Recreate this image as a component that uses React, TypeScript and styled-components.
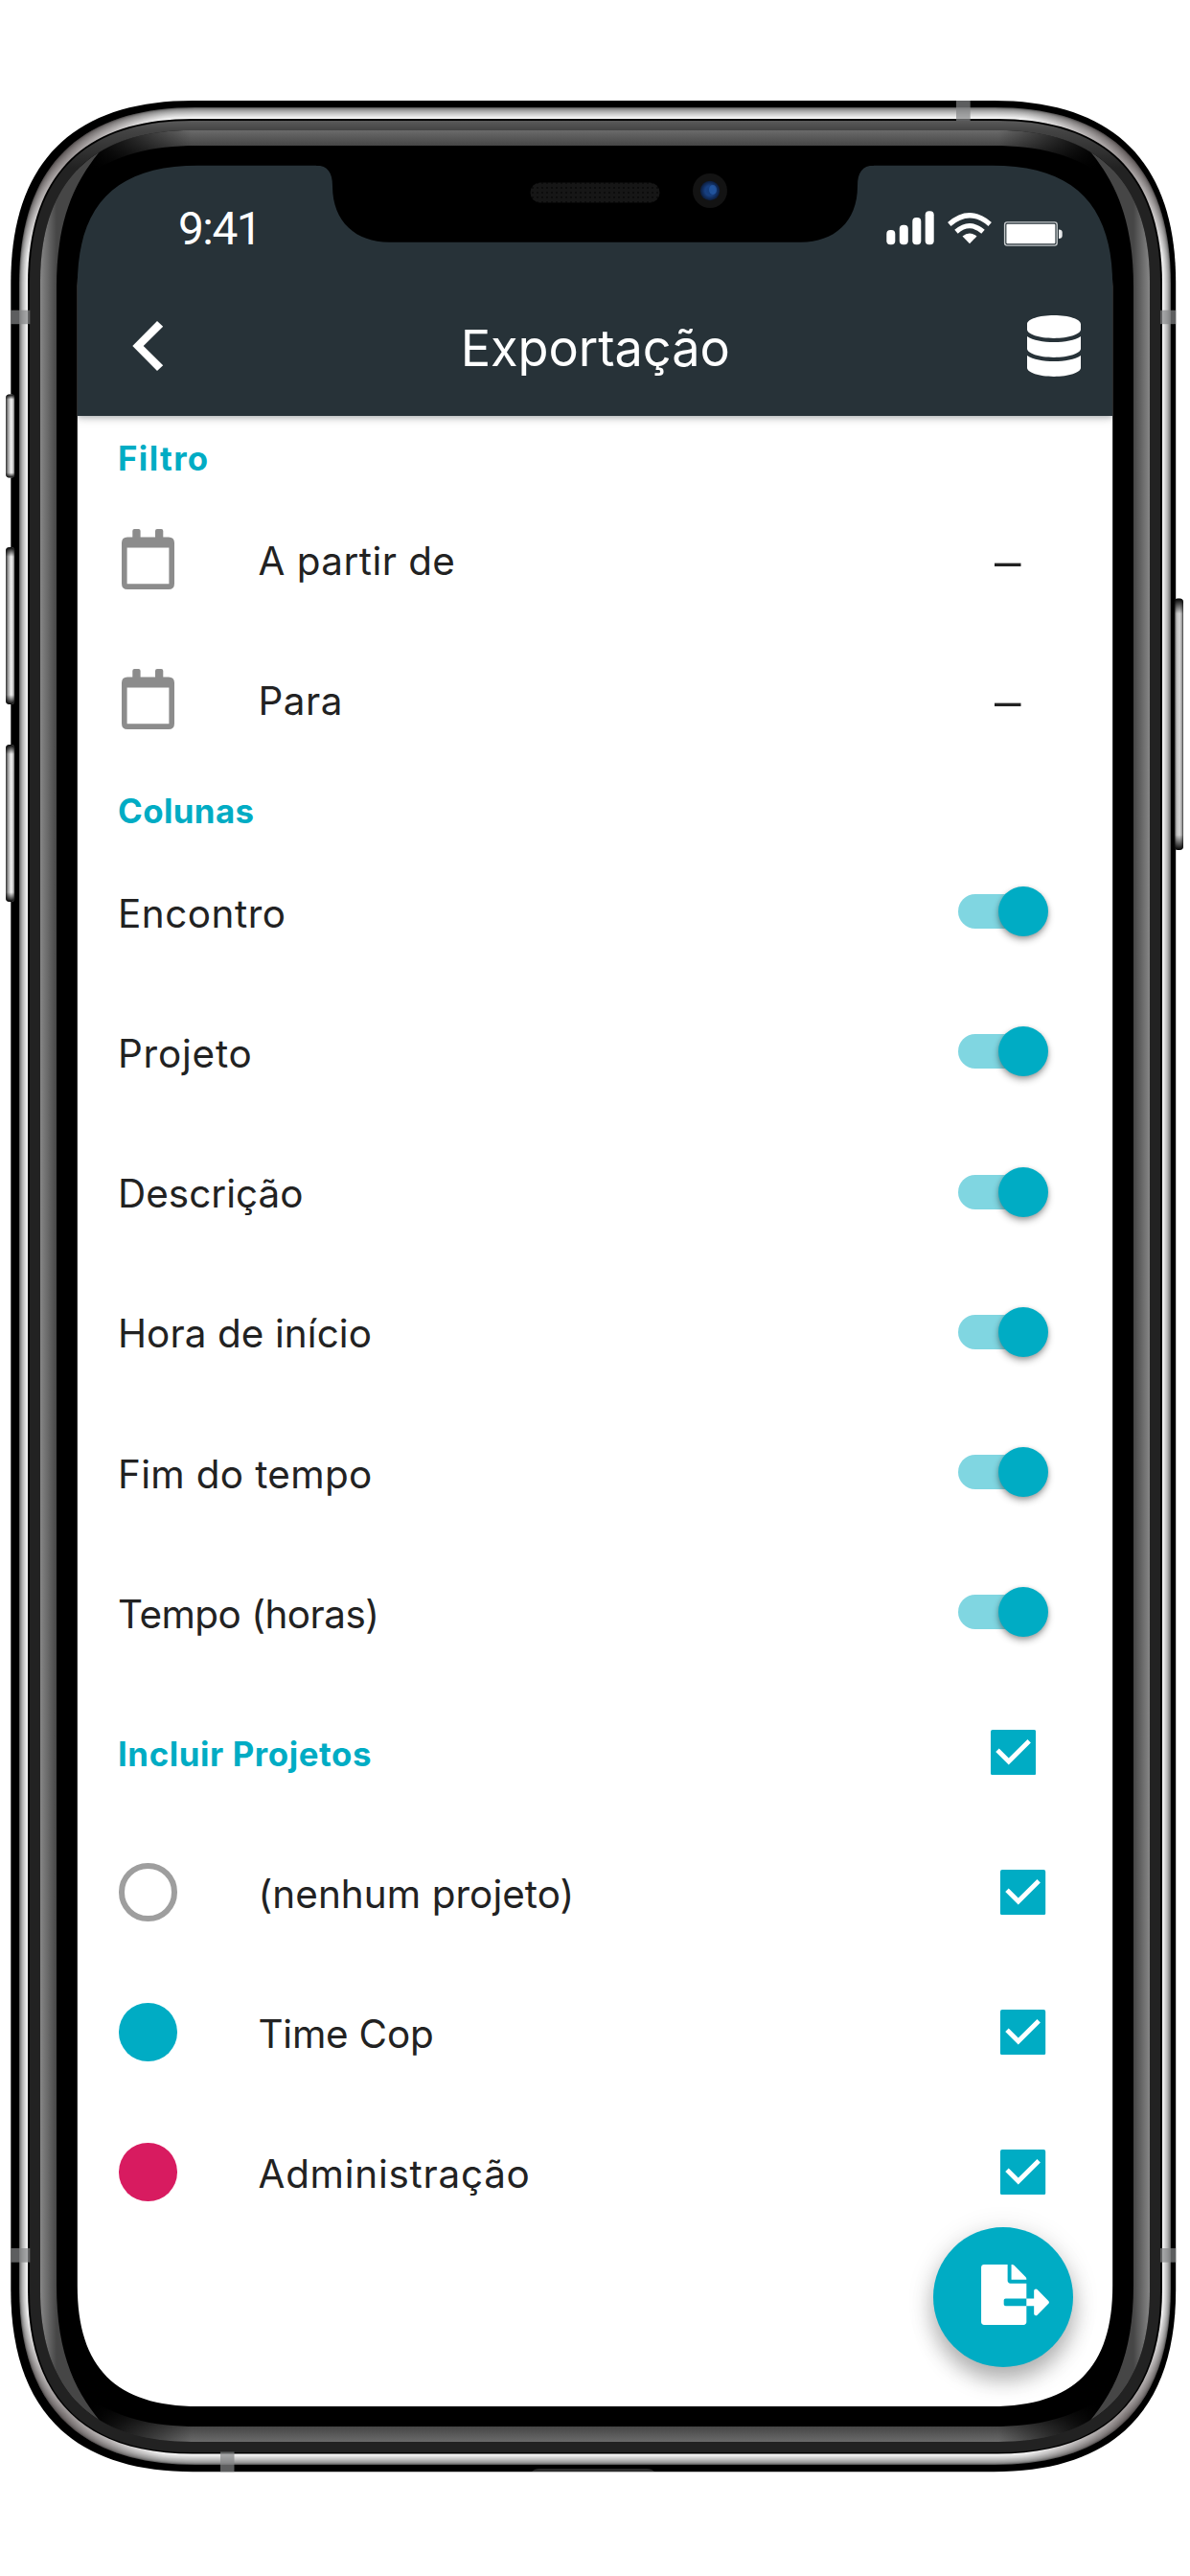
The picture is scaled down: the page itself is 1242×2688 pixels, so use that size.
import React from 'react';
import styled, { createGlobalStyle } from 'styled-components';

const accent = '#00acc4';
const chrome = '#273238';
const ink = '#222222';

const GlobalStyle = createGlobalStyle`
  *, *::before, *::after { box-sizing: border-box; }
  body {
    margin: 0;
    background: #fff;
    font-family: Inter, Roboto, "Liberation Sans", sans-serif;
    color: ${ink};
  }
`;

const Stage = styled.div`
  position: relative;
  width: 1242px;
  height: 2688px;
  padding: 172px 81px 177px;
  overflow: hidden;
`;

const FrameArt = styled.svg`
  position: absolute;
  inset: 0;
  pointer-events: none;
`;

const Screen = styled.main`
  position: relative;
  display: flex;
  flex-direction: column;
  width: 1080px;
  height: 2339px;
  background: #fff;
`;

const Header = styled.header`
  position: relative;
  flex: none;
  height: 262px;
  background: ${chrome};
  color: #fff;
  box-shadow: 0 1px 6px rgba(20, 30, 35, 0.3), 0 4px 10px rgba(0, 0, 0, 0.1);
`;

const StatusBar = styled.div`
  display: flex;
  justify-content: space-between;
  height: 116px;
  padding: 40px 52px 0 105px;
`;

const Clock = styled.time`
  font: 400 47.8px/54px Roboto, sans-serif;
  letter-spacing: -1.5px;
`;

const Indicators = styled.div`
  display: flex;
  padding-top: 7px;
  align-items: flex-start;
`;

const Toolbar = styled.div`
  display: grid;
  grid-template-columns: 1fr auto 1fr;
  align-items: center;
  height: 146px;
  padding: 0 33.5px 0 57px;
`;

const IconButton = styled.button<{ $end?: boolean }>`
  display: flex;
  justify-self: ${p => (p.$end ? 'end' : 'start')};
  padding: 0;
  border: 0;
  background: none;
  color: inherit;
`;

const Title = styled.h1`
  margin: 0;
  padding: 4px 23px 0 0;
  font-size: 52.3px;
  line-height: 64px;
  font-weight: 400;
  letter-spacing: -0.07px;
`;

const Body = styled.div`
  display: flex;
  flex-direction: column;
`;

const SectionTitle = styled.h2<{ $track: number }>`
  margin: 0;
  font-size: 34.8px;
  line-height: 42px;
  font-weight: 700;
  color: ${accent};
  letter-spacing: ${p => p.$track}px;
`;

const SectionHead = styled.div`
  height: 76px;
  padding: 23px 42px 0;
`;

const Row = styled.label<{ $end: number }>`
  display: flex;
  align-items: center;
  height: 146.15px;
  padding: 0 ${p => p.$end}px 0 42px;
`;

const RowHeading = styled.div`
  flex: 1;
  padding-top: 4px;
`;

const Leading = styled.span`
  display: flex;
  flex: none;
  width: 146.5px;
`;

const Label = styled.span<{ $track: number }>`
  flex: 1;
  padding-top: 5.4px;
  font-size: 40.4px;
  line-height: 50px;
  letter-spacing: ${p => p.$track}px;
`;

const Value = styled.span`
  padding-top: 3px;
  font: 400 49.5px/56px "Liberation Sans", sans-serif;
`;

const Dot = styled.span<{ $color?: string }>`
  width: 60.5px;
  height: 60.5px;
  margin-left: 1px;
  border-radius: 50%;
  background: ${p => p.$color ?? 'transparent'};
  border: ${p => (p.$color ? 'none' : '6px solid #9e9e9e')};
`;

const Track = styled.span`
  display: flex;
  align-items: center;
  justify-content: flex-end;
  width: 94px;
  height: 36px;
  border-radius: 18px;
  background: linear-gradient(90deg, #80d6e1 0 76px, transparent 76px);
`;

const Knob = styled.span`
  flex: none;
  width: 52px;
  height: 52px;
  border-radius: 50%;
  background: ${accent};
  box-shadow: 0 4px 7px rgba(0, 0, 0, 0.3), 0 1px 4px rgba(0, 0, 0, 0.16);
`;

const Fab = styled.button`
  position: absolute;
  right: 41px;
  bottom: 41px;
  display: flex;
  align-items: center;
  width: 146px;
  height: 146px;
  padding: 0 0 5px 49.5px;
  border: 0;
  border-radius: 50%;
  background: ${accent};
  box-shadow: 0 14px 22px rgba(0, 0, 0, 0.26), 0 4px 30px rgba(0, 0, 0, 0.12);
`;

const Calendar = styled.svg`
  margin-left: 3.7px;
`;

function CalendarIcon() {
  return (
    <Calendar width="55" height="63" viewBox="0 0 55 63">
      <path
        fill="#8c8c8c"
        fillRule="evenodd"
        d="M11.3 8.5V2q0-2 2-2h4.3q2 0 2 2v6.5H35V2q0-2 2-2h4.3q2 0 2 2v6.5H49q6 0 6 6V57q0 6-6 6H6q-6 0-6-6V14.5q0-6 6-6ZM5.6 19.500V57.300H49.400V19.500Z"
      />
    </Calendar>
  );
}

function CheckIcon() {
  return (
    <svg width="47.200" height="47.200" viewBox="0 0 47 47">
      <rect width="47" height="47" rx="2" fill={accent} />
      <path fill="#fff" d="M5.200 23 8.700 19.500 18.700 29.300 38.300 10 41.700 13.500 18.700 36.400Z" />
    </svg>
  );
}

function StatusIcons() {
  return (
    <svg width="184" height="38" viewBox="925 218 184 38" fill="#fff">
      <rect x="925.300" y="239" width="9" height="15.300" rx="4" />
      <rect x="938.800" y="233.700" width="9" height="20.600" rx="4" />
      <rect x="952.300" y="226" width="9" height="28.300" rx="4" />
      <rect x="965.700" y="219.300" width="9" height="35" rx="4" />
      <path d="M1012 253.300 1004.500 245.500Q1012 239.500 1019.500 245.500Z" />
      <g fill="none" stroke="#fff" strokeWidth="5.200">
        <path d="M998 240.800Q1012 228.500 1026 240.800" />
        <path d="M990.800 233Q1012 214.500 1033.200 233" />
      </g>
      <rect x="1048.600" y="230.900" width="54.600" height="24.200" rx="2.500" fill="none" stroke="#c4c8ca" strokeWidth="1.400" />
      <rect x="1050.400" y="232.700" width="51" height="20.600" rx="1" />
      <path d="M1105 238.500q3.700 0 3.700 3v3.500q0 3-3.700 3Z" fill="#e8eaeb" />
    </svg>
  );
}

type Box = [number, number, number, number];

/** Continuous-corner rectangle: one cubic per corner, r long, with handles of share h. */
function roundBox([l, t, r, b]: Box, rad: number, h = 0.66) {
  const k = rad * (1 - h);
  return (
    `M${l} ${t + rad}C${l} ${t + k} ${l + k} ${t} ${l + rad} ${t}H${r - rad}` +
    `C${r - k} ${t} ${r} ${t + k} ${r} ${t + rad}V${b - rad}` +
    `C${r} ${b - k} ${r - k} ${b} ${r - rad} ${b}H${l + rad}` +
    `C${l + k} ${b} ${l} ${b - k} ${l} ${b - rad}Z`
  );
}

const screenHole = roundBox([80.8, 172.7, 1161.2, 2511], 126, 0.68);
const holePunch = `M0 0H1242V2688H0Z${screenHole}`;
const STEPS = 12;
const steel = Array.from({ length: STEPS }, (_, i) => {
  const f = i / STEPS;
  const tone = Math.round(95 + 160 * Math.pow(f, 0.62));
  return {
    d: roundBox([20 + 9 * f, 112 + 12 * f, 1222 - 9 * f, 2572 - 11.5 * f], 184 - 12 * f),
    fill: `rgb(${tone},${tone},${tone})`,
  };
});
const corners: [number, number][] = [[62, 158], [1180, 158], [62, 2524], [1180, 2524]];
const sideButtons: [number, number, number, boolean][] = [
  [6, 411.5, 87, false],
  [6, 571, 164, false],
  [6, 777, 164, false],
  [1225.5, 624.5, 262.5, true],
];
const antennas: Box[] = [
  [11.3, 323.7, 20, 14.5],
  [1211, 323.7, 16.2, 14.5],
  [11.3, 2346, 20, 14.7],
  [1211, 2346, 16.2, 14.7],
  [998, 105, 14.7, 21],
  [230, 2558.5, 14.5, 20.8],
];

function DeviceFrame() {
  return (
    <FrameArt width="1242" height="2688" viewBox="0 0 1242 2688">
      <defs>
        <mask id="hole">
          <path d={holePunch} fill="#fff" fillRule="evenodd" />
        </mask>
        <clipPath id="band">
          <path d={roundBox([42, 136, 1200, 2548], 158)} />
        </clipPath>
        <clipPath id="rim">
          <path d={roundBox([20, 112, 1222, 2572], 184)} />
        </clipPath>
        <radialGradient id="tint">
          <stop offset="0" stopColor="#4a3e3e" stopOpacity="0.55" />
          <stop offset="0.5" stopColor="#4a3e3e" stopOpacity="0.32" />
          <stop offset="1" stopColor="#4a3e3e" stopOpacity="0" />
        </radialGradient>
        <linearGradient id="ring" gradientUnits="userSpaceOnUse" x1="0" y1="126" x2="0" y2="175">
          <stop offset="0" stopColor="#5a5a5a" />
          <stop offset="0.2" stopColor="#444" />
          <stop offset="1" stopColor="#222" />
        </linearGradient>
        <linearGradient id="left" gradientUnits="userSpaceOnUse" x1="42" y1="0" x2="59" y2="0">
          <stop offset="0" stopColor="#878787" />
          <stop offset="1" stopColor="#464646" />
        </linearGradient>
        <linearGradient id="right" gradientUnits="userSpaceOnUse" x1="1200" y1="0" x2="1183" y2="0">
          <stop offset="0" stopColor="#878787" />
          <stop offset="1" stopColor="#464646" />
        </linearGradient>
        <linearGradient id="top" gradientUnits="userSpaceOnUse" x1="0" y1="136" x2="0" y2="176">
          <stop offset="0" stopColor="#6a6a6a" />
          <stop offset="0.4" stopColor="#464646" />
          <stop offset="1" stopColor="#000" />
        </linearGradient>
        <linearGradient id="bottom" gradientUnits="userSpaceOnUse" x1="0" y1="2548" x2="0" y2="2508">
          <stop offset="0" stopColor="#6a6a6a" />
          <stop offset="0.4" stopColor="#464646" />
          <stop offset="1" stopColor="#000" />
        </linearGradient>
        <linearGradient id="fade" gradientUnits="userSpaceOnUse" x1="95" y1="0" x2="1147" y2="0">
          <stop offset="0" stopColor="#000" />
          <stop offset="0.1" stopColor="#000" stopOpacity="0" />
          <stop offset="0.9" stopColor="#000" stopOpacity="0" />
          <stop offset="1" stopColor="#000" />
        </linearGradient>
        <linearGradient id="key">
          <stop offset="0" stopColor="#333" />
          <stop offset="0.3" stopColor="#aaa" />
          <stop offset="0.6" stopColor="#f2f2f2" />
          <stop offset="0.85" stopColor="#bbb" />
          <stop offset="1" stopColor="#222" />
        </linearGradient>
        <linearGradient id="powerKey">
          <stop offset="0" stopColor="#111" />
          <stop offset="0.25" stopColor="#bbb" />
          <stop offset="0.6" stopColor="#d8d8d8" />
          <stop offset="0.85" stopColor="#999" />
          <stop offset="1" stopColor="#333" />
        </linearGradient>
        <linearGradient id="keyEnds" x1="0" y1="0" x2="0" y2="1">
          <stop offset="0" stopColor="#000" />
          <stop offset="0.06" stopColor="#000" stopOpacity="0" />
          <stop offset="0.94" stopColor="#000" stopOpacity="0" />
          <stop offset="1" stopColor="#000" />
        </linearGradient>
        <radialGradient id="lens">
          <stop offset="0" stopColor="#123a78" />
          <stop offset="0.5" stopColor="#173f80" />
          <stop offset="1" stopColor="#0b1c3c" />
        </radialGradient>
        <pattern id="mesh" width="5" height="5" patternUnits="userSpaceOnUse">
          <rect width="5" height="5" fill="#161616" />
          <rect width="2" height="2" fill="#0c0c0c" />
        </pattern>
      </defs>

      <g mask="url(#hole)">
        <path d={roundBox([11.3, 105, 1227.2, 2579.2], 190)} fill="#000" />
        {steel.map(s => (
          <path key={s.d} d={s.d} fill={s.fill} />
        ))}
        <g clipPath="url(#rim)">
          {corners.map(([x, y]) => (
            <circle key={`${x}-${y}`} cx={x} cy={y} r="115" fill="url(#tint)" />
          ))}
        </g>
        <path d={roundBox([29, 124, 1213, 2560.5], 172)} fill="#000" />
        <path d={roundBox([31, 126, 1211, 2559], 169)} fill="url(#ring)" />
        <g clipPath="url(#band)">
          <rect x="40" y="130" width="1162" height="2422" fill="#000" />
          <path d="M80 130V190C120 160 160 152 205 152H1037C1082 152 1122 160 1162 190V130Z" fill="url(#top)" />
          <path d="M80 2554V2494C120 2524 160 2532 205 2532H1037C1082 2532 1122 2524 1162 2494V2554Z" fill="url(#bottom)" />
          <rect x="80" y="130" width="1082" height="60" fill="url(#fade)" />
          <rect x="80" y="2494" width="1082" height="60" fill="url(#fade)" />
          <path d="M40 130 111 150C80 185 59 225 59 300V2384C59 2459 80 2499 111 2534L40 2554Z" fill="url(#left)" />
          <path d="M1202 130 1131 150C1162 185 1183 225 1183 300V2384C1183 2459 1162 2499 1131 2534L1202 2554Z" fill="url(#right)" />
        </g>
      </g>

      {sideButtons.map(([x, y, h, power]) => (
        <g key={y}>
          <rect x={x} y={y} width="9.5" height={h} rx="4" fill={power ? 'url(#powerKey)' : 'url(#key)'} />
          <rect x={x} y={y} width="9.5" height={h} rx="4" fill="url(#keyEnds)" />
        </g>
      ))}
      {antennas.map(([x, y, w, h]) => (
        <rect key={`${x}-${y}`} x={x} y={y} width={w} height={h} fill="#848688" fillOpacity="0.7" />
      ))}
      <path d="M555 2579Q558 2576 563 2576H675Q680 2576 683 2579Z" fill="#2c2c2c" />

      <path
        d="M330 171V172.700C342 172.700 347 180 347 194C347 232 372 252.700 406 252.700H836C870 252.700 895 232 895 194C895 180 900 172.700 912 172.700V171Z"
        fill="#000"
      />
      <rect x="553.5" y="190.5" width="135" height="21" rx="10.5" fill="url(#mesh)" />
      <circle cx="741" cy="199" r="18" fill="#131313" />
      <circle cx="741" cy="199" r="10.2" fill="url(#lens)" />
      <ellipse cx="744" cy="198" rx="4" ry="5" fill="#2a62b0" fillOpacity="0.6" />
    </FrameArt>
  );
}

const filters = [
  { label: 'A partir de', track: 0.47 },
  { label: 'Para', track: 0.5 },
];

const columns = [
  { label: 'Encontro', track: 0.54 },
  { label: 'Projeto', track: 0.8 },
  { label: 'Descrição', track: 0.05 },
  { label: 'Hora de início', track: 0.1 },
  { label: 'Fim do tempo', track: 0.35 },
  { label: 'Tempo (horas)', track: -0.5 },
];

const projects = [
  { label: '(nenhum projeto)', track: 0.08 },
  { label: 'Time Cop', track: -0.21, color: accent },
  { label: 'Administração', track: 0.76, color: '#d81b60' },
];

export default function App() {
  return (
    <>
      <GlobalStyle />
      <Stage>
        <Screen>
          <Header>
            <StatusBar>
              <Clock>9:41</Clock>
              <Indicators>
                <StatusIcons />
              </Indicators>
            </StatusBar>
            <Toolbar>
              <IconButton aria-label="Voltar">
                <svg width="33" height="52" viewBox="0 0 33 52">
                  <path fill="#fff" d="M26 0 32.200 5.700 11.700 26 32.200 46.300 26 52 .3 26Z" />
                </svg>
              </IconButton>
              <Title>Exportação</Title>
              <IconButton $end aria-label="Dados">
                <svg width="56" height="64" viewBox="0 0 448 512">
                  <path
                    fill="#fff"
                    d="M448 73.143v45.714C448 159.143 347.667 192 224 192S0 159.143 0 118.857V73.143C0 32.857 100.333 0 224 0s224 32.857 224 73.143zM448 176v102.857C448 319.143 347.667 352 224 352S0 319.143 0 278.857V176c48.125 33.143 136.208 48.572 224 48.572S399.874 209.143 448 176zm0 160v102.857C448 479.143 347.667 512 224 512S0 479.143 0 438.857V336c48.125 33.143 136.208 48.572 224 48.572S399.874 369.143 448 336z"
                  />
                </svg>
              </IconButton>
            </Toolbar>
          </Header>

          <Body>
            <SectionHead>
              <SectionTitle $track={1.4}>Filtro</SectionTitle>
            </SectionHead>
            {filters.map(f => (
              <Row key={f.label} $end={95.5}>
                <Leading>
                  <CalendarIcon />
                </Leading>
                <Label $track={f.track}>{f.label}</Label>
                <Value>–</Value>
              </Row>
            ))}

            <SectionHead>
              <SectionTitle $track={0.41}>Colunas</SectionTitle>
            </SectionHead>
            {columns.map(c => (
              <Row key={c.label} $end={67}>
                <Label $track={c.track}>{c.label}</Label>
                <Track>
                  <Knob />
                </Track>
              </Row>
            ))}

            <Row $end={80}>
              <RowHeading>
                <SectionTitle $track={0.6}>Incluir Projetos</SectionTitle>
              </RowHeading>
              <CheckIcon />
            </Row>
            {projects.map(p => (
              <Row key={p.label} $end={69.5}>
                <Leading>
                  <Dot $color={p.color} />
                </Leading>
                <Label $track={p.track}>{p.label}</Label>
                <CheckIcon />
              </Row>
            ))}
          </Body>

          <Fab aria-label="Exportar">
            <svg width="71" height="63" viewBox="0 0 576 512">
              <path
                fill="#fff"
                d="M384 121.900c0-6.300-2.500-12.400-7-16.900L279.100 7c-4.500-4.500-10.600-7-17-7H256v128h128zM571 308l-95.700-96.400c-10.100-10.100-27.400-3-27.400 11.300V288h-64v64h64v65.200c0 14.300 17.300 21.400 27.400 11.300L571 332c6.600-6.600 6.600-17.400 0-24zm-379 28v-32c0-8.800 7.200-16 16-16h176V160H248c-13.200 0-24-10.800-24-24V0H24C10.700 0 0 10.700 0 24v464c0 13.300 10.700 24 24 24h336c13.300 0 24-10.700 24-24V352H208c-8.800 0-16-7.200-16-16z"
              />
            </svg>
          </Fab>
        </Screen>
        <DeviceFrame />
      </Stage>
    </>
  );
}
